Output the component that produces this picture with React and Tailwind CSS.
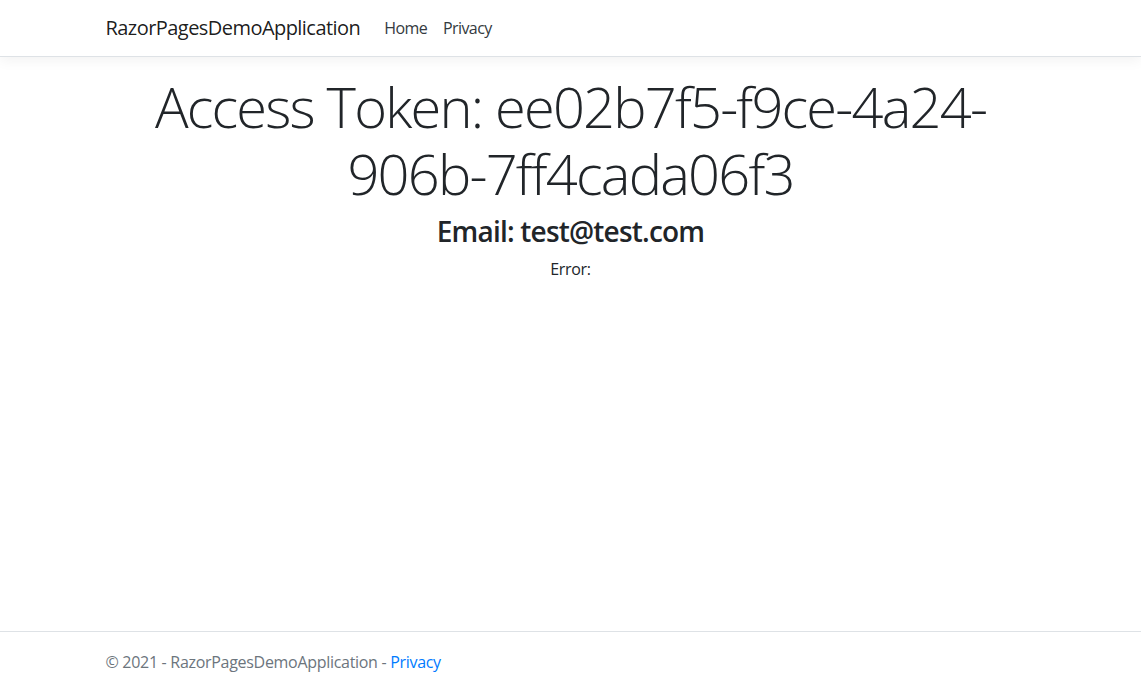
import React from 'react'

const FONT = { fontFamily: '"Open Sans", "Noto Sans", sans-serif' }

export default function App() {
  return (
    <div className="min-h-screen flex flex-col bg-white text-[#212529]" style={FONT}>
      {/* Navbar */}
      <header className="border-b border-[#dee2e6] shadow-[0_4px_12px_rgba(0,0,0,0.05)] mb-4">
        <nav className="max-w-[960px] mx-auto px-[15px] py-2 flex items-center">
          <a className="text-[20px] leading-[30px] py-[5px] mr-4 tracking-[-0.55px] text-black/90">RazorPagesDemoApplication</a>
          <ul className="flex">
            <li><a className="block px-2 py-2 text-[16px] leading-6 tracking-[-0.6px] text-[#343a40]">Home</a></li>
            <li><a className="block px-2 py-2 text-[16px] leading-6 tracking-[-0.6px] text-[#343a40]">Privacy</a></li>
          </ul>
        </nav>
      </header>

      {/* Main */}
      <main className="flex-1 w-full max-w-[960px] mx-auto px-[15px] pb-4">
        <div className="text-center">
          <h1 className="text-[56px] font-light leading-[1.2] tracking-[-1.8px] mb-2">
            Access Token: ee02b7f5-f9ce-4a24-906b-7ff4cada06f3
          </h1>
          <h3 className="text-[28px] font-semibold leading-[1.2] tracking-[-0.8px] mb-2">Email: test@test.com</h3>
          <p className="text-[16px] leading-6 tracking-[-0.3px]">Error: </p>
        </div>
      </main>

      {/* Footer */}
      <footer className="border-t border-[#dee2e6] text-[#6c757d] whitespace-nowrap pt-[2px] leading-[56px]">
        <div className="max-w-[960px] mx-auto px-[15px] text-[16px] tracking-[-0.3px]">
          &copy; 2021 - RazorPagesDemoApplication - <a className="text-[#007bff]">Privacy</a>
        </div>
      </footer>
    </div>
  )
}
